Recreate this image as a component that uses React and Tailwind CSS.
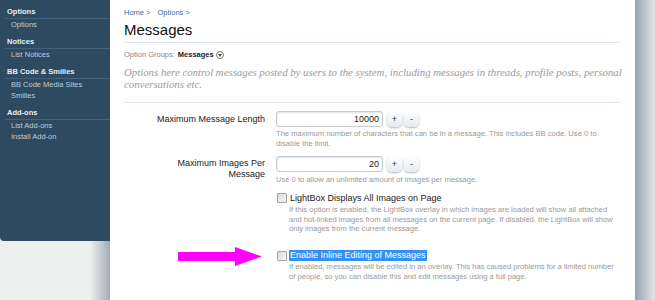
import React from 'react';

const sections = [
  { title: 'Options', items: ['Options'] },
  { title: 'Notices', items: ['List Notices'] },
  { title: 'BB Code & Smilies', items: ['BB Code Media Sites', 'Smilies'] },
  { title: 'Add-ons', items: ['List Add-ons', 'Install Add-on'] },
];

function Sidebar() {
  return (
    <div className="w-[110px] shrink-0 flex flex-col">
      <div className="h-[241px] bg-[#2e4a60] rounded-bl-[4px] pt-[7px]">
        {sections.map((s) => (
          <div key={s.title} className="mb-[7px]">
            <div className="ml-[5px] pl-[2px] pb-[1px] border-b border-[#42637f] text-[7.5px] leading-[10px] font-bold text-[#e8eff5]">
              {s.title}
            </div>
            {s.items.map((item) => (
              <div key={item} className="pl-[11px] text-[7.5px] leading-[11px] text-[#bccddb]">
                {item}
              </div>
            ))}
          </div>
        ))}
      </div>
      <div className="flex-1 bg-gradient-to-r from-[#eef0f0] from-[82%] to-[#a2acb5]"></div>
    </div>
  );
}

function Stepper({ value }) {
  return (
    <div className="flex items-center">
      <div className="w-[107px] h-[16px] bg-white border border-[#c5cad1] rounded-[3px] shadow-[inset_0_1px_2px_rgba(0,0,0,0.12)] text-right pr-[3px] text-[9px] leading-[14px] text-[#222]">
        {value}
      </div>
      <button className="ml-[4px] w-[15px] h-[16px] rounded-[5px] bg-gradient-to-b from-white to-[#e6eaf2] shadow-[0_1px_2px_rgba(0,0,0,0.3)] text-[9px] leading-[16px] text-[#333]">+</button>
      <button className="ml-[2px] w-[15px] h-[16px] rounded-[5px] bg-gradient-to-b from-white to-[#e6eaf2] shadow-[0_1px_2px_rgba(0,0,0,0.3)] text-[9px] leading-[16px] text-[#333]">-</button>
    </div>
  );
}

function Checkbox() {
  return (
    <div className="w-[10px] h-[10px] shrink-0 border border-[#a3a3a3] rounded-[1px] bg-gradient-to-br from-[#dcdcdc] to-[#f6f6f6]"></div>
  );
}

export default function App() {
  return (
    <div className="w-[655px] h-[300px] overflow-hidden flex bg-[#eef0f0] relative" style={{ fontFamily: '"Liberation Sans", Arial, sans-serif' }}>
      <Sidebar />

      <div className="w-[525px] shrink-0 bg-white pl-[14px] pr-[15px]">
        <div className="pt-[8px] text-[7.5px] leading-[9px] text-[#3b72a6]">
          Home &gt;<span className="ml-[7px]">Options &gt;</span>
        </div>
        <h1 className="mt-[4px] text-[15px] leading-[18px] text-[#111]">Messages</h1>
        <div className="mt-[3px] h-px bg-[#dde7f1]"></div>

        <div className="mt-[7px] flex items-center text-[7.5px] leading-[10px] text-[#888]">
          Option Groups:
          <span className="ml-[3px] font-bold text-[#222]">Messages</span>
          <span className="ml-[2px] w-[8px] h-[8px] rounded-full border border-[#777] flex items-center justify-center">
            <svg width="4" height="3" viewBox="0 0 4 3"><path d="M0 0h4L2 3z" fill="#444" /></svg>
          </span>
        </div>

        <p className="mt-[6px] text-[10.8px] leading-[12px] italic text-[#9a9a9a]" style={{ fontFamily: '"Liberation Serif", serif' }}>
          <span className="block whitespace-nowrap">Options here control messages posted by users to the system, including messages in threads, profile posts, personal</span>
          <span className="block whitespace-nowrap">conversations etc.</span>
        </p>
        <div className="mt-[12px] h-px bg-[#dde7f1]"></div>

        <div className="pl-[25px] mt-[8px] grid grid-cols-[116px_1fr] gap-x-[11px] text-[#222]">
          <div className="text-right text-[9px] leading-[16px]">Maximum Message Length</div>
          <div>
            <Stepper value="10000" />
            <div className="mt-[2px] text-[7.6px] leading-[10px] text-[#999] whitespace-nowrap">
              The maximum number of characters that can be in a message. This includes BB code. Use 0 to<br />
              disable the limit.
            </div>
          </div>

          <div className="mt-[7px] pt-[2px] text-right text-[9px] leading-[11px]">Maximum Images Per Message</div>
          <div className="mt-[7px]">
            <Stepper value="20" />
            <div className="mt-[3px] text-[7.6px] leading-[10px] text-[#999] whitespace-nowrap">
              Use 0 to allow an unlimited amount of images per message.
            </div>
          </div>

          <div></div>
          <div className="mt-[8px] pl-[1px]">
            <div className="flex items-start gap-[2px]">
              <Checkbox />
              <div>
                <div className="text-[9px] leading-[10px] pl-[1px]">LightBox Displays All Images on Page</div>
                <div className="mt-[2px] text-[7.6px] leading-[9.5px] text-[#999] whitespace-nowrap">
                  If this option is enabled, the LightBox overlay in which images are loaded will show all attached<br />
                  and hot-linked images from all messages on the current page. If disabled, the LightBox will show<br />
                  only images from the current message.
                </div>
              </div>
            </div>
          </div>

          <div></div>
          <div className="mt-[16px] pl-[1px]">
            <div className="flex items-start gap-[2px]">
              <div className="mt-[1px]"><Checkbox /></div>
              <div>
                <div className="w-fit bg-[#3391f5] text-white text-[9px] leading-[11px] px-[1px]">Enable Inline Editing of Messages</div>
                <div className="mt-[1px] text-[7.6px] leading-[10px] text-[#999] whitespace-nowrap">
                  If enabled, messages will be edited in an overlay. This has caused problems for a limited number<br />
                  of people, so you can disable this and edit messages using a full page.
                </div>
              </div>
            </div>
          </div>
        </div>
      </div>

      <div className="flex-1 bg-gradient-to-r from-[#99a4ae] to-[#e2e6e9]"></div>

      <svg className="absolute left-[178px] top-[247px]" width="85" height="20" viewBox="0 0 85 20">
        <path d="M0 5H57V0L84 9.5L57 19V14H0Z" fill="#ff00ff" />
      </svg>
    </div>
  );
}
